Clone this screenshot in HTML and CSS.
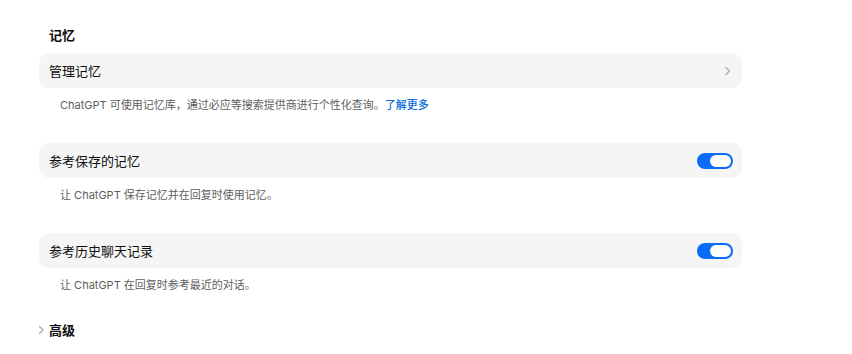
FILE: index.html
```html
<!DOCTYPE html>
<html lang="zh-CN">
<head>
  <meta charset="UTF-8" />
  <title>记忆</title>
  <link rel="stylesheet" href="styles.css">
</head>
<body>
  <div class="settings">
    <h3 class="section-title">记忆</h3>

    <div class="setting">
      <div class="setting-row">
        <span class="setting-label">管理记忆</span>
        <svg class="chevron" width="8" height="10" viewBox="0 0 8 10">
          <path d="M2 1.5 L5.5 5 L2 8.5" fill="none" stroke="#b0b0b0" stroke-width="1.4" stroke-linecap="round" stroke-linejoin="round"/>
        </svg>
      </div>
      <p class="setting-desc">ChatGPT 可使用记忆库，通过必应等搜索提供商进行个性化查询。<a href="#" class="link">了解更多</a></p>
    </div>

    <div class="setting">
      <div class="setting-row">
        <span class="setting-label">参考保存的记忆</span>
        <span class="toggle on"><span class="knob"></span></span>
      </div>
      <p class="setting-desc">让 ChatGPT 保存记忆并在回复时使用记忆。</p>
    </div>

    <div class="setting">
      <div class="setting-row">
        <span class="setting-label">参考历史聊天记录</span>
        <span class="toggle on"><span class="knob"></span></span>
      </div>
      <p class="setting-desc">让 ChatGPT 在回复时参考最近的对话。</p>
    </div>

    <div class="advanced">
      <svg class="adv-chevron" width="7" height="10" viewBox="0 0 7 10">
        <path d="M1.5 1.5 L5 5 L1.5 8.5" fill="none" stroke="#a8a8a8" stroke-width="1.2" stroke-linecap="round" stroke-linejoin="round"/>
      </svg>
      <span class="advanced-label">高级</span>
    </div>
  </div>
</body>
</html>
```

FILE: styles.css
```css
body {
  margin: 0;
  background: #ffffff;
  font-family: "Inter", "Noto Sans CJK SC", sans-serif;
  color: #0d0d0d;
}
.settings {
  width: 703px;
  padding: 25px 0 0 39px;
}
.section-title {
  margin: 0 0 8px 10px;
  font-size: 13px;
  line-height: 20px;
  font-weight: 600;
}
.setting {
  margin-bottom: 30px;
}
.setting-row {
  display: flex;
  align-items: center;
  justify-content: space-between;
  height: 35px;
  padding: 0 10px 0 10px;
  background: #f5f5f5;
  border-radius: 10px;
}
.setting-label {
  font-size: 13px;
  font-weight: 400;
}
.setting-desc {
  margin: 9px 0 0 21px;
  font-size: 11px;
  line-height: 16px;
  color: #5d5d5d;
}
.link {
  color: #0b6bd8;
  text-decoration: none;
  font-weight: 500;
}
.toggle {
  display: flex;
  align-items: center;
  width: 36px;
  height: 16px;
  border-radius: 9px;
  background: #d9d9d9;
  box-sizing: border-box;
  padding: 2px;
  margin-right: -1px;
}
.toggle.on {
  background: #0a6cf5;
  justify-content: flex-end;
}
.knob {
  width: 21px;
  height: 12px;
  border-radius: 7px;
  background: #ffffff;
}
.advanced {
  display: flex;
  align-items: center;
  gap: 4px;
  margin-top: -3px;
  margin-left: -1px;
}
.advanced-label {
  font-size: 13px;
  line-height: 20px;
  font-weight: 600;
}
```
